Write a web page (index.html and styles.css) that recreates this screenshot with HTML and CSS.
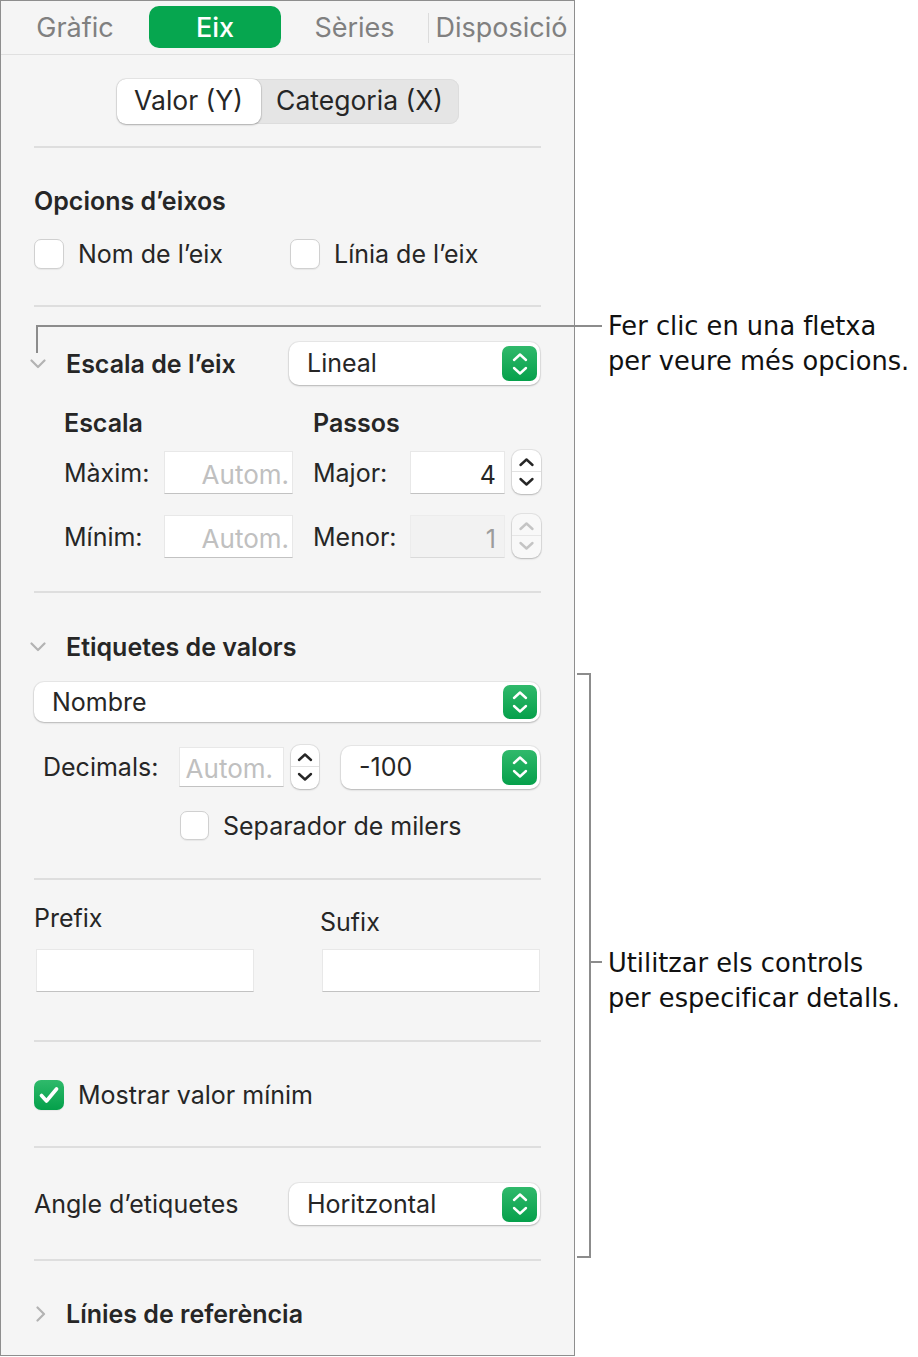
FILE: index.html
```html
<!DOCTYPE html>
<html lang="ca">
<head>
  <meta charset="UTF-8">
  <meta name="viewport" content="width=device-width, initial-scale=1.0">
  <title>Eix - Inspector</title>
  <link rel="stylesheet" href="styles.css">
</head>
<body>
  <div class="page">
    <div class="inspector">
      <div class="tabs">
        <div class="tab tab-chart">Gràfic</div>
        <div class="tab tab-active">Eix</div>
        <div class="tab tab-series">Sèries</div>
        <div class="tab-sep"></div>
        <div class="tab tab-layout">Disposició</div>
      </div>

      <div class="seg-wrap">
        <div class="segmented">
          <div class="seg seg-on">Valor (Y)</div>
          <div class="seg">Categoria (X)</div>
        </div>
      </div>

      <section class="group group-options">
        <h2 class="title">Opcions d’eixos</h2>
        <div class="check-row">
          <label class="check"><span class="box"></span>Nom de l’eix</label>
          <label class="check"><span class="box"></span>Línia de l’eix</label>
        </div>
      </section>

      <section class="group group-scale">
        <div class="disclosure">
          <svg class="chev" width="16" height="10" viewBox="0 0 16 10"><polyline points="1.5,1.5 8,8 14.5,1.5"/></svg>
          <h2 class="title">Escala de l’eix</h2>
          <div class="popup popup-scale">
            <span>Lineal</span>
            <span class="popup-arrows"><svg width="20" height="24" viewBox="0 0 20 24"><polyline points="4,8 10,2.5 16,8"/><polyline points="4,16 10,21.5 16,16"/></svg></span>
          </div>
        </div>

        <div class="scale-grid scale-head">
          <h3 class="title sub">Escala</h3>
          <h3 class="title sub passos">Passos</h3>
        </div>
        <div class="scale-grid scale-row">
          <span class="lbl">Màxim:</span>
          <div class="field placeholder">Autom.</div>
          <span class="lbl col4">Major:</span>
          <div class="field">4</div>
          <div class="stepper col7">
            <svg width="29" height="44" viewBox="0 0 29 44"><polyline points="8.5,15 14.5,9.5 20.5,15"/><polyline points="8.5,29 14.5,34.5 20.5,29"/></svg>
          </div>
        </div>
        <div class="scale-grid scale-row row-min">
          <span class="lbl">Mínim:</span>
          <div class="field placeholder">Autom.</div>
          <span class="lbl col4">Menor:</span>
          <div class="field disabled">1</div>
          <div class="stepper col7 stepper-off">
            <svg width="29" height="44" viewBox="0 0 29 44"><polyline points="8.5,15 14.5,9.5 20.5,15"/><polyline points="8.5,29 14.5,34.5 20.5,29"/></svg>
          </div>
        </div>
      </section>

      <section class="group group-labels">
        <div class="disclosure disclosure-text">
          <svg class="chev" width="16" height="10" viewBox="0 0 16 10"><polyline points="1.5,1.5 8,8 14.5,1.5"/></svg>
          <h2 class="title">Etiquetes de valors</h2>
        </div>
        <div class="popup popup-number">
          <span>Nombre</span>
          <span class="popup-arrows"><svg width="20" height="24" viewBox="0 0 20 24"><polyline points="4,8 10,2.5 16,8"/><polyline points="4,16 10,21.5 16,16"/></svg></span>
        </div>
        <div class="decimals-row">
          <span class="lbl lbl-dec">Decimals:</span>
          <div class="field field-dec placeholder">Autom.</div>
          <div class="stepper stepper-dec">
            <svg width="28" height="44" viewBox="0 0 28 44"><polyline points="8,15 14,9.5 20,15"/><polyline points="8,29 14,34.5 20,29"/></svg>
          </div>
          <div class="popup popup-neg">
            <span>-100</span>
            <span class="popup-arrows"><svg width="20" height="24" viewBox="0 0 20 24"><polyline points="4,8 10,2.5 16,8"/><polyline points="4,16 10,21.5 16,16"/></svg></span>
          </div>
        </div>
        <label class="check check-sep"><span class="box"></span>Separador de milers</label>
      </section>

      <section class="group group-affix">
        <div class="affix">
          <span class="lbl affix-lbl">Prefix</span>
          <span class="lbl affix-lbl sufix">Sufix</span>
          <div class="field field-affix"></div>
          <div class="field field-affix"></div>
        </div>
      </section>

      <section class="group group-min">
        <label class="check"><span class="box box-on"><svg width="20" height="18" viewBox="0 0 20 18"><polyline points="2.5,9.5 7.5,15 17.5,3"/></svg></span>Mostrar valor mínim</label>
      </section>

      <section class="group group-angle">
        <div class="angle-row">
          <span class="lbl">Angle d’etiquetes</span>
          <div class="popup popup-angle">
            <span>Horitzontal</span>
            <span class="popup-arrows"><svg width="20" height="24" viewBox="0 0 20 24"><polyline points="4,8 10,2.5 16,8"/><polyline points="4,16 10,21.5 16,16"/></svg></span>
          </div>
        </div>
      </section>

      <section class="group group-refs">
        <div class="disclosure disclosure-text">
          <svg class="chev chev-right" width="10" height="16" viewBox="0 0 10 16"><polyline points="1.5,1.5 8,8 1.5,14.5"/></svg>
          <h2 class="title">Línies de referència</h2>
        </div>
      </section>
    </div>

    <!-- callouts -->
    <div class="callout-line line-arrow-v"></div>
    <div class="callout-line line-arrow-h"></div>
    <p class="callout callout-top">Fer clic en una fletxa<br>per veure més opcions.</p>

    <div class="bracket"></div>
    <div class="callout-line line-bracket-tick"></div>
    <p class="callout callout-bottom">Utilitzar els controls<br>per especificar detalls.</p>
  </div>
</body>
</html>
```

FILE: styles.css
```css
* {
  margin: 0;
  padding: 0;
  box-sizing: border-box;
}

body {
  background: #fff;
  font-family: Inter, 'Noto Sans', sans-serif;
  color: #262626;
}

.page {
  position: relative;
  width: 918px;
  height: 1357px;
}

.inspector {
  width: 575px;
  height: 1356px;
  background: #f5f5f5;
  border: 1px solid #8e8e8e;
}

/* tabs */
.tabs {
  display: flex;
  align-items: center;
  height: 54px;
  border-bottom: 1px solid #e0e0e0;
}

.tab {
  font-size: 27px;
  color: #808080;
  text-align: center;
  line-height: 40px;
}

.tab-chart { width: 148px; }
.tab-series { width: 147px; }
.tab-layout { width: 145px; }

.tab-active {
  width: 132px;
  height: 42px;
  margin-top: -1px;
  background: #06a64f;
  color: #fff;
  border-radius: 10px;
  font-weight: 500;
  line-height: 43px;
}

.tab-sep {
  width: 1px;
  height: 30px;
  background: #dcdcdc;
}

/* segmented control */
.seg-wrap {
  padding: 24px 0 22px;
}

.segmented {
  display: flex;
  width: 342px;
  height: 45px;
  margin: 0 auto;
  background: #e5e5e5;
  border-radius: 9px;
  box-shadow: inset 0 0 0 1px #dddddd;
}

.seg {
  flex: 1;
  font-size: 26.5px;
  line-height: 42px;
  text-align: center;
}

.seg-on {
  flex: 0 0 144px;
  background: #fff;
  border-radius: 9px;
  box-shadow: 0 1px 2px rgba(0, 0, 0, 0.25), 0 0 0 1px rgba(0, 0, 0, 0.06);
}

/* groups */
.group {
  margin: 0 33px;
  border-top: 2px solid #dedede;
}

.title {
  font-size: 25px;
  font-weight: 600;
  line-height: 30px;
  color: #262626;
}

.lbl {
  font-size: 25px;
  line-height: 30px;
}

.group-options { padding: 38px 0 36px; }

.check-row {
  display: grid;
  grid-template-columns: 256px 1fr;
  margin-top: 23px;
}

.check {
  display: flex;
  align-items: center;
  height: 30px;
  font-size: 25px;
}

.box {
  display: flex;
  align-items: center;
  justify-content: center;
  width: 30px;
  height: 30px;
  margin-right: 14px;
  background: #fff;
  border: 1px solid #d0d0d0;
  border-radius: 7px;
  box-shadow: 0 1px 1px rgba(0, 0, 0, 0.06);
}

.box-on {
  border: none;
  background: linear-gradient(#2fba6b, #04a04a);
}

.box-on polyline {
  fill: none;
  stroke: #fff;
  stroke-width: 3.6;
  stroke-linecap: round;
  stroke-linejoin: round;
}

/* disclosure rows */
.disclosure {
  display: flex;
  align-items: center;
  height: 43px;
}

.disclosure-text { height: 30px; }

.chev {
  flex: none;
  margin-left: -4px;
  margin-right: 20px;
}

.chev polyline {
  fill: none;
  stroke: #b3b3b3;
  stroke-width: 2.2;
  stroke-linecap: round;
  stroke-linejoin: round;
}

.chev-right {
  margin-left: 2px;
  margin-right: 20px;
}

/* popup buttons */
.popup {
  display: flex;
  align-items: center;
  justify-content: space-between;
  height: 42px;
  padding: 0 3px 0 18px;
  background: #fff;
  border-radius: 10px;
  font-size: 25px;
  box-shadow: 0 1px 2px rgba(0, 0, 0, 0.22), 0 0 0 1px rgba(0, 0, 0, 0.05);
}

.popup > span:first-child { margin-top: -1px; }

.popup-arrows {
  display: flex;
  align-items: center;
  justify-content: center;
  width: 35px;
  height: 35px;
  border-radius: 7px;
  background: linear-gradient(#30b96b, #06a04b);
}

.popup-arrows polyline {
  fill: none;
  stroke: #fff;
  stroke-width: 2.4;
  stroke-linecap: round;
  stroke-linejoin: round;
}

.popup-scale {
  width: 251px;
  height: 43px;
  margin-left: auto;
  margin-right: 1px;
}

/* scale grid */
.group-scale { padding: 35px 0 33px; }

.scale-grid {
  display: grid;
  grid-template-columns: 100px 129px 20px 97px 95px 7px 29px;
  align-items: center;
  padding-left: 30px;
}

.scale-head { margin-top: 23px; }
.scale-head .sub { grid-column: 1 / 3; }
.scale-head .passos { grid-column: 4 / 8; }

.scale-row { height: 43px; margin-top: 13px; }
.scale-row.row-min { margin-top: 21px; }

.col4 { grid-column: 4; }
.col7 { grid-column: 7; }

.field {
  height: 43px;
  padding: 2px 8px 0 0;
  background: #fff;
  border: 1px solid #e8e8e8;
  border-bottom-color: #c2c2c2;
  font-size: 25px;
  line-height: 42px;
  text-align: right;
}

.field.placeholder {
  color: #c0c0c0;
  padding-right: 3px;
  font-size: 26px;
}

.field.disabled {
  background: #f2f2f2;
  border-color: #ececec;
  border-bottom-color: #dadada;
  color: #9c9c9c;
}

.stepper {
  width: 29px;
  height: 44px;
  margin-top: -2px;
  background: #fff;
  border-radius: 9px;
  box-shadow: 0 1px 2px rgba(0, 0, 0, 0.2), 0 0 0 1px rgba(0, 0, 0, 0.07);
  background-image: linear-gradient(#fff 21px, #e2e2e2 21px, #e2e2e2 22.5px, #fff 22.5px);
}

.stepper svg { display: block; }

.stepper polyline {
  fill: none;
  stroke: #262626;
  stroke-width: 2.4;
  stroke-linecap: round;
  stroke-linejoin: round;
}

.stepper-off {
  background: #f8f8f8;
  background-image: linear-gradient(#f8f8f8 21px, #e6e6e6 21px, #e6e6e6 22.5px, #f8f8f8 22.5px);
}

.stepper-off polyline { stroke: #c4c4c4; }

/* value labels */
.group-labels { padding: 39px 0 38px; }

.popup-number {
  height: 40px;
  margin-top: 20px;
  width: 506px;
}

.popup-number .popup-arrows {
  width: 34px;
  height: 34px;
}

.decimals-row {
  display: flex;
  align-items: center;
  height: 44px;
  margin-top: 23px;
  padding-left: 9px;
}

.decimals-row .stepper { margin-top: 0; }

.lbl-dec { width: 136px; }

.field-dec {
  width: 105px;
  height: 40px;
  padding-top: 0;
  line-height: 41px;
}

.field-dec.placeholder { padding-right: 10px; }

.stepper-dec {
  width: 28px;
  margin-left: 7px;
}

.popup-neg {
  width: 199px;
  height: 43px;
  margin-left: 22px;
}

.check-sep {
  height: 29px;
  margin-top: 22px;
  margin-left: 146px;
}

.check-sep .box {
  width: 29px;
  height: 29px;
}

/* prefix / suffix */
.group-affix { padding: 22px 0 48px; }

.affix {
  display: grid;
  grid-template-columns: 220px 221px;
  column-gap: 66px;
  row-gap: 17px;
}

.affix-lbl { height: 30px; margin-top: 1px; margin-bottom: -1px; }
.sufix { margin-top: 5px; margin-bottom: -5px; }

.field-affix {
  width: 218px;
  margin-left: 2px;
}

.group-min { padding: 38px 0 36px; }

.group-angle { padding: 35px 0 34px; }

.angle-row {
  display: flex;
  align-items: center;
  justify-content: space-between;
}

.popup-angle {
  width: 251px;
  margin-right: 1px;
}

.group-refs { padding-top: 38px; }

/* callouts */
.callout-line {
  position: absolute;
  background: #8c8c8c;
}

.line-arrow-v {
  left: 36px;
  top: 325px;
  width: 2px;
  height: 28px;
}

.line-arrow-h {
  left: 36px;
  top: 325px;
  width: 566px;
  height: 2px;
}

.callout {
  position: absolute;
  left: 608px;
  font-family: 'DejaVu Sans', sans-serif;
  font-size: 25.7px;
  line-height: 35px;
  color: #111;
}

.callout-top { top: 309px; }
.callout-bottom { top: 946px; }

.bracket {
  position: absolute;
  left: 577px;
  top: 673px;
  width: 14px;
  height: 585px;
  border: 2px solid #8c8c8c;
  border-left: none;
}

.line-bracket-tick {
  left: 590px;
  top: 961px;
  width: 12px;
  height: 2px;
}
```
